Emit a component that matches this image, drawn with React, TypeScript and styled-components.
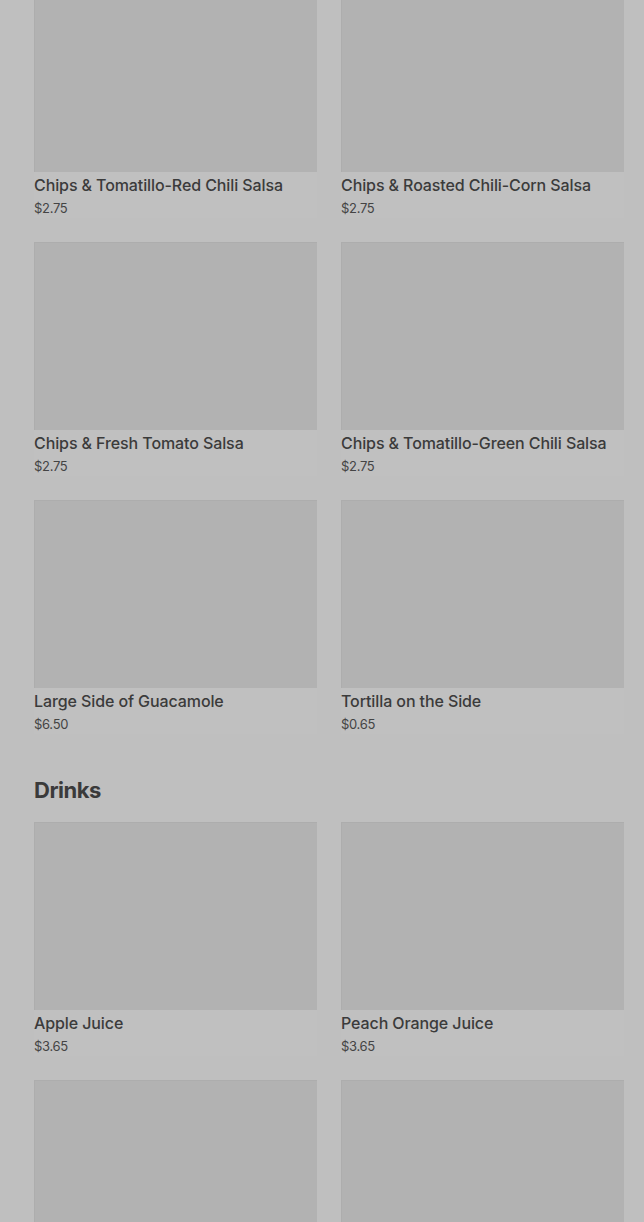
import styled, { createGlobalStyle } from "styled-components";

const GlobalStyle = createGlobalStyle`
  html, body {
    margin: 0;
    padding: 0;
    background: #bfbfbf;
    overflow: hidden;
  }
  body {
    font-family: Inter, "Noto Sans", "Liberation Sans", sans-serif;
    color: #3b3b3b;
  }
`;

type MenuItem = { name: string; price: string };

const sides: MenuItem[] = [
  { name: "Chips & Tomatillo-Red Chili Salsa", price: "$2.75" },
  { name: "Chips & Roasted Chili-Corn Salsa", price: "$2.75" },
  { name: "Chips & Fresh Tomato Salsa", price: "$2.75" },
  { name: "Chips & Tomatillo-Green Chili Salsa", price: "$2.75" },
  { name: "Large Side of Guacamole", price: "$6.50" },
  { name: "Tortilla on the Side", price: "$0.65" },
];

const drinks: MenuItem[] = [
  { name: "Apple Juice", price: "$3.65" },
  { name: "Peach Orange Juice", price: "$3.65" },
  { name: "Pineapple Orange Banana Juice", price: "$3.65" },
  { name: "Sparkling Water", price: "$3.25" },
];

// the shot is taken part way down the menu, so the page is clipped to the window
const Page = styled.main`
  height: 1222px;
  overflow: hidden;
  padding: 0 20px 0 34px;
`;

const Scroller = styled.div`
  margin-top: -16px;
`;

const Section = styled.section`
  & + & {
    margin-top: 40px;
  }
`;

const Heading = styled.h2`
  margin: 0 0 16px;
  font-size: 22px;
  line-height: 32px;
  font-weight: 700;
  letter-spacing: -0.5px;
  color: #3a3a3a;
`;

const Grid = styled.div`
  display: grid;
  grid-template-columns: 283px 283px;
  column-gap: 24px;
  row-gap: 24px;
`;

const Card = styled.div`
  display: flex;
  flex-direction: column;
  background: #c0c0c0;
`;

const Thumb = styled.div`
  height: 188px;
  background: #b2b2b2;
  box-shadow: inset 1px 1px 0 #adadad;
`;

const Name = styled.div`
  margin-top: 2px;
  font-size: 16px;
  line-height: 22px;
  font-weight: 500;
  letter-spacing: -0.1px;
  color: #3b3b3b;
  white-space: nowrap;
`;

const Price = styled.div`
  margin-top: 2px;
  font-size: 13px;
  line-height: 20px;
  font-weight: 400;
  letter-spacing: -0.3px;
  color: #444444;
`;

const ItemCard = ({ name, price }: MenuItem) => (
  <Card>
    <Thumb />
    <Name>{name}</Name>
    <Price>{price}</Price>
  </Card>
);

export default function App() {
  return (
    <>
      <GlobalStyle />
      <Page>
        <Scroller>
          <Section>
            <Grid>
              {sides.map((item) => (
                <ItemCard key={item.name} {...item} />
              ))}
            </Grid>
          </Section>
          <Section>
            <Heading>Drinks</Heading>
            <Grid>
              {drinks.map((item) => (
                <ItemCard key={item.name} {...item} />
              ))}
            </Grid>
          </Section>
        </Scroller>
      </Page>
    </>
  );
}
